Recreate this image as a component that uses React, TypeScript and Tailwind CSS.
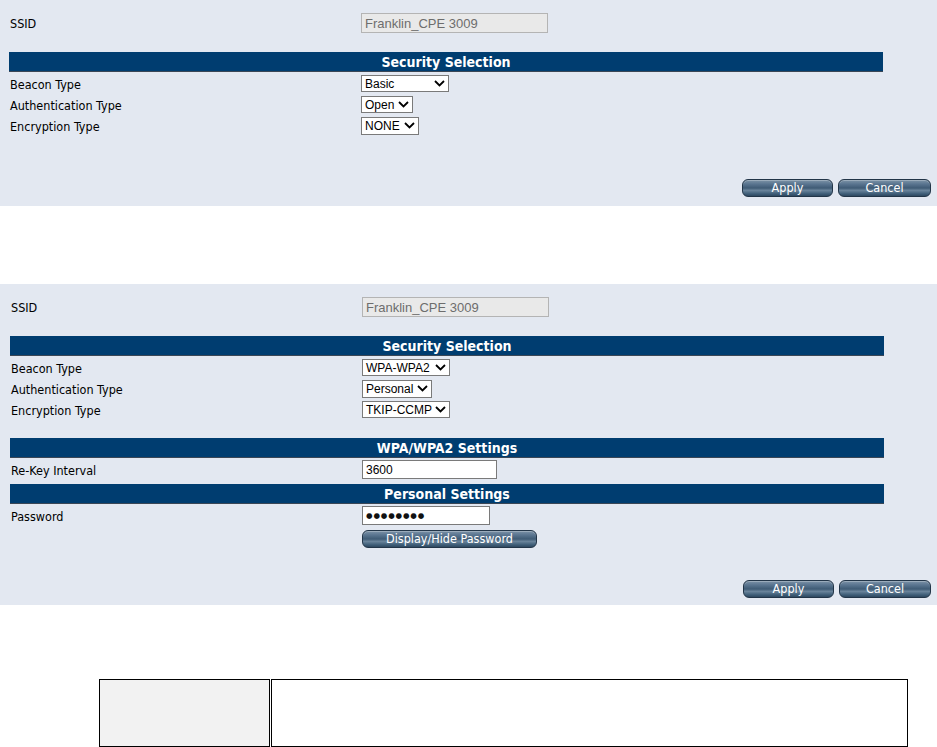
import React from "react";

const tah = "font-['DejaVu_Sans_Condensed','DejaVu_Sans',sans-serif] font-stretch-condensed";
const ari = "font-['Liberation_Sans',Arial,sans-serif]";

function Chevron() {
  return (
    <svg width="11" height="7" viewBox="0 0 11 7" className="shrink-0">
      <path d="M1 1 L5.5 5.5 L10 1" fill="none" stroke="#000" strokeWidth="1.8" />
    </svg>
  );
}

function Select({ value, w, h = 17 }: { value: string; w: number; h?: number }) {
  return (
    <div
      className={`flex items-center justify-between bg-white border border-[#7a7a7a] pl-[3px] pr-[3px] text-[12px] leading-none text-black whitespace-nowrap ${ari}`}
      style={{ width: w, height: h }}
    >
      <span>{value}</span>
      <Chevron />
    </div>
  );
}

function Bar({ title }: { title: string }) {
  return (
    <div
      className={`w-[874px] h-[20px] bg-[#003d70] border-b border-[#3b4756] flex items-center justify-center text-white font-bold text-[14px] leading-none ${tah}`}
    >
      {title}
    </div>
  );
}

function Btn({ label, w }: { label: string; w: number }) {
  return (
    <div
      className={`h-[18px] rounded-[6px] border border-[#223548] flex items-center justify-center text-white text-[12.5px] leading-none whitespace-nowrap ${tah} bg-[linear-gradient(to_bottom,#7d93a7_0%,#5a7590_25%,#3f5b75_50%,#6a849b_65%,#41607a_85%,#2e4860_100%)] shadow-[inset_0_1px_0_rgba(255,255,255,0.25)]`}
      style={{ width: w }}
    >
      {label}
    </div>
  );
}

function Label({ children }: { children: React.ReactNode }) {
  return <div className={`w-[351px] shrink-0 pt-[3px] text-[12.5px] leading-none text-black ${tah}`}>{children}</div>;
}

function SsidRow() {
  return (
    <div className="flex items-center h-[20px]">
      <Label>SSID</Label>
      <div
        className={`w-[187px] h-[20px] bg-[#e9e9e9] border border-[#b4b4b4] flex items-center pl-[3px] text-[13px] leading-none text-[#6d6d6d] whitespace-nowrap ${ari}`}
      >
        Franklin_CPE 3009
      </div>
    </div>
  );
}

function Row({ label, children, h = 21 }: { label: string; children: React.ReactNode; h?: number }) {
  return (
    <div className="flex items-center" style={{ height: h }}>
      <Label>{label}</Label>
      {children}
    </div>
  );
}

export default function App() {
  return (
    <div className="w-[937px] h-[747px] overflow-hidden bg-white">
      {/* Panel 1 */}
      <div className="h-[206px] bg-[#e3e8f1] pt-[13px]">
        <div className="pl-[10px]">
          <SsidRow />
        </div>
        <div className="pl-[9px] mt-[19px]">
          <Bar title="Security Selection" />
        </div>
        <div className="pl-[10px] mt-[1px]">
          <Row label="Beacon Type">
            <Select value="Basic" w={88} />
          </Row>
          <Row label="Authentication Type">
            <Select value="Open" w={52} />
          </Row>
          <Row label="Encryption Type">
            <Select value="NONE" w={58} h={18} />
          </Row>
        </div>
        <div className="mt-[43px] flex justify-end gap-[5px] pr-[6px]">
          <Btn label="Apply" w={91} />
          <Btn label="Cancel" w={93} />
        </div>
      </div>

      {/* Panel 2 */}
      <div className="mt-[78px] h-[321px] bg-[#e3e8f1] pt-[13px]">
        <div className="pl-[11px]">
          <SsidRow />
        </div>
        <div className="pl-[10px] mt-[19px]">
          <Bar title="Security Selection" />
        </div>
        <div className="pl-[11px] mt-[1px]">
          <Row label="Beacon Type">
            <Select value="WPA-WPA2" w={88} />
          </Row>
          <Row label="Authentication Type">
            <Select value="Personal" w={70} h={18} />
          </Row>
          <Row label="Encryption Type">
            <Select value="TKIP-CCMP" w={88} />
          </Row>
        </div>
        <div className="pl-[10px] mt-[18px]">
          <Bar title="WPA/WPA2 Settings" />
        </div>
        <div className="pl-[11px]">
          <Row label="Re-Key Interval" h={23}>
            <div
              className={`w-[135px] h-[19px] bg-white border border-[#7a7a7a] flex items-center pl-[3px] text-[12px] leading-none text-black ${ari}`}
            >
              3600
            </div>
          </Row>
        </div>
        <div className="pl-[10px] mt-[3px]">
          <Bar title="Personal Settings" />
        </div>
        <div className="pl-[11px]">
          <Row label="Password" h={23}>
            <div
              className="w-[128px] h-[19px] bg-white border border-[#7a7a7a] flex items-center pl-[3px] text-[7.5px] leading-none text-[#111] tracking-[0.85px] whitespace-nowrap font-['DejaVu_Sans',sans-serif]"
            >
              ●●●●●●●●
            </div>
          </Row>
          <div className="pl-[351px] mt-[3px]">
            <Btn label="Display/Hide Password" w={175} />
          </div>
        </div>
        <div className="mt-[32px] flex justify-end gap-[5px] pr-[6px]">
          <Btn label="Apply" w={91} />
          <Btn label="Cancel" w={92} />
        </div>
      </div>

      {/* Table */}
      <div className="mt-[74px] ml-[99px] w-[809px] h-[68px] flex">
        <div className="w-[171px] h-full bg-[#f2f2f2] border border-black" />
        <div className="flex-1 h-full bg-white border border-black ml-[1px]" />
      </div>
    </div>
  );
}
